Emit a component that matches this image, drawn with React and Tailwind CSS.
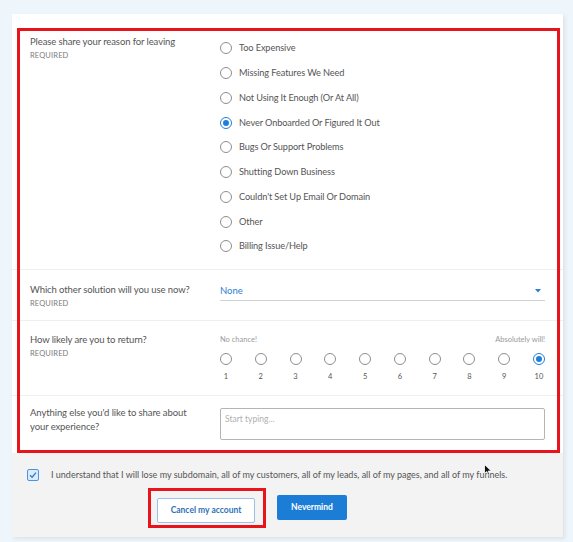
import React, { useState } from 'react';

const reasons = [
  'Too Expensive',
  'Missing Features We Need',
  'Not Using It Enough (Or At All)',
  'Never Onboarded Or Figured It Out',
  'Bugs Or Support Problems',
  'Shutting Down Business',
  "Couldn't Set Up Email Or Domain",
  'Other',
  'Billing Issue/Help',
];

const Radio = ({ checked }) => (
  <span
    className={`flex h-[12px] w-[12px] shrink-0 items-center justify-center rounded-full border ${
      checked ? 'border-[#1f7fd8]' : 'border-[#8e8e8e]'
    } bg-white`}
  >
    {checked && <span className="h-[6px] w-[6px] rounded-full bg-[#1f7fd8]" />}
  </span>
);

const FieldLabel = ({ children, required }) => (
  <div className="w-[190px] shrink-0">
    <div className="max-w-[172px] text-[9.5px] leading-[14px] tracking-[-0.1px] text-[#555]">{children}</div>
    {required && (
      <div className="mt-[1px] text-[7.5px] leading-[11px] uppercase tracking-[0.02em] text-[#7a7a7a]">
        Required
      </div>
    )}
  </div>
);

export default function App() {
  const [reason, setReason] = useState(3);
  const [score, setScore] = useState(10);
  const [agree, setAgree] = useState(true);

  return (
    <div
      className="min-h-[542px] bg-[#eef6fb] pl-[12px] pt-[14px]"
      style={{ fontFamily: 'Lato, "Open Sans", sans-serif' }}
    >
      <div className="relative w-[551px] bg-white shadow-[2px_2px_4px_rgba(0,0,0,0.08)]">
        {/* reason */}
        <div className="flex border-b border-[#efefef] pb-[10px] pl-[18px] pr-[18px] pt-[21px]">
          <FieldLabel required>Please share your reason for leaving</FieldLabel>
          <div className="flex flex-col pt-[1px]">
            {reasons.map((r, i) => (
              <button
                key={r}
                onClick={() => setReason(i)}
                className="flex h-[24.75px] items-center gap-[7px] text-left text-[9.2px] tracking-[-0.1px] text-[#555]"
              >
                <Radio checked={reason === i} />
                <span>{r}</span>
              </button>
            ))}
          </div>
        </div>

        {/* other solution */}
        <div className="flex h-[51px] border-b border-[#efefef] pl-[18px] pr-[18px] pt-[13px]">
          <FieldLabel required>Which other solution will you use now?</FieldLabel>
          <div className="flex h-[18px] flex-1 items-center justify-between border-b-[1.5px] border-[#d2d2d2] pr-[4px]">
            <span className="text-[9.5px] text-[#2a7fd0]">None</span>
            <svg width="6" height="4" viewBox="0 0 6 4">
              <path d="M0 0 L6 0 L3 3.5 Z" fill="#2a7fd0" />
            </svg>
          </div>
        </div>

        {/* likely to return */}
        <div className="flex h-[75px] border-b border-[#efefef] pl-[18px] pr-[18px] pt-[12px]">
          <FieldLabel required>How likely are you to return?</FieldLabel>
          <div className="flex flex-1 flex-col">
            <div className="flex justify-between text-[7.5px] leading-[14px] text-[#9a9a9a]">
              <span>No chance!</span>
              <span>Absolutely will!</span>
            </div>
            <div className="mt-[5px] flex justify-between">
              {Array.from({ length: 10 }, (_, i) => i + 1).map((n) => (
                <button
                  key={n}
                  onClick={() => setScore(n)}
                  className="flex w-[12px] flex-col items-center"
                >
                  <span className="flex h-[14px] items-center">
                    <Radio checked={score === n} />
                  </span>
                  <span className="mt-[5px] text-[7.5px] leading-[12px] text-[#555]">{n}</span>
                </button>
              ))}
            </div>
          </div>
        </div>

        {/* feedback */}
        <div className="flex h-[57px] pl-[18px] pr-[18px] pt-[10px]">
          <FieldLabel>Anything else you'd like to share about your experience?</FieldLabel>
          <textarea
            placeholder="Start typing..."
            className="mt-[2px] h-[32px] flex-1 resize-none rounded-[2px] border-[1.5px] border-[#b5b5b5] px-[4px] py-[4px] text-[8.5px] text-[#555] outline-none placeholder:text-[#b0b0b0]"
          />
        </div>

        {/* footer */}
        <div className="bg-[#f3f3f3] pb-[14px] pt-[15px]">
          <label className="flex items-center gap-[12px] pl-[15px] text-[9px] text-[#555]">
            <button
              onClick={() => setAgree(!agree)}
              className="flex h-[12px] w-[12px] items-center justify-center rounded-[2px] border-[1.5px] border-[#4a93e0] bg-[#dcebfb]"
            >
              {agree && (
                <svg width="8" height="8" viewBox="0 0 8 8">
                  <path d="M1 4.2 L3.1 6.2 L7 1.6" fill="none" stroke="#2a7fd0" strokeWidth="1.3" />
                </svg>
              )}
            </button>
            <span>
              I understand that I will lose my subdomain, all of my customers, all of my leads, all of my pages, and all of my funnels.
            </span>
          </label>
          <div className="mt-[14px] flex gap-[22px] pl-[145px]">
            <span className="relative">
              <button className="h-[25px] w-[98px] rounded-[2px] border border-[#9cc1e6] bg-white text-[8.5px] font-bold text-[#2d72b8]">
                Cancel my account
              </button>
              <span className="pointer-events-none absolute bottom-[-5px] left-[-9px] right-[-11px] top-[-7px] border-[3px] border-[#e8141c]" />
            </span>
            <button className="h-[25px] w-[70px] rounded-[2px] bg-[#1b7dd6] text-[8.5px] font-bold text-white">
              Nevermind
            </button>
          </div>
        </div>

        {/* annotation around the form */}
        <span className="pointer-events-none absolute left-[5px] top-[14px] h-[425px] w-[543px] border-[3px] border-[#e8141c]" />

        {/* mouse cursor */}
        <svg className="pointer-events-none absolute left-[472px] top-[450px]" width="8" height="12" viewBox="0 0 8 12">
          <path d="M0.5 0.5 L0.5 9.5 L2.8 7.5 L4.3 11 L5.6 10.4 L4.2 7 L7.3 7 Z" fill="#111" stroke="#fff" strokeWidth="0.8" />
        </svg>
      </div>
    </div>
  );
}
